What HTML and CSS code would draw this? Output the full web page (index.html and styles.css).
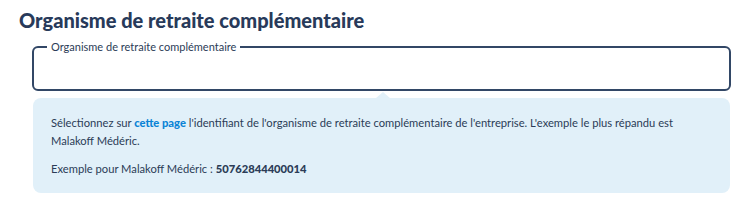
FILE: index.html
```html
<!DOCTYPE html>
<html lang="fr">
<head>
  <meta charset="UTF-8" />
  <title>Organisme de retraite complémentaire</title>
  <link rel="stylesheet" href="styles.css">
</head>
<body>

  <h1 class="section-title">Organisme de retraite complémentaire</h1>

  <div class="field-block">
    <fieldset class="outlined-field">
      <legend>Organisme de retraite complémentaire</legend>
      <input type="text" class="field-input">
    </fieldset>

    <!-- Help bubble under the field -->
    <div class="help-box">
      <p>Sélectionnez sur <a href="#">cette page</a> l'identifiant de l'organisme de retraite complémentaire de l'entreprise. L'exemple le plus répandu est Malakoff Médéric.</p>
      <p>Exemple pour Malakoff Médéric : <strong>50762844400014</strong></p>
    </div>
  </div>

</body>
</html>
```

FILE: styles.css
```css
* {
  box-sizing: border-box;
  margin: 0;
  padding: 0;
}

body {
  font-family: 'Lato', 'Noto Sans', sans-serif;
  background: #ffffff;
  color: #2b3c57;
  padding: 9px 19px;
}

.section-title {
  font-size: 20px;
  font-weight: 900;
  color: #283a5a;
  line-height: 22px;
  margin-bottom: 10px;
}

.field-block {
  margin-left: 13px;
  width: 699px;
}

.outlined-field {
  border: 2px solid #324766;
  border-radius: 6px;
  height: 50px;
  padding: 0 12px;
}

.outlined-field legend {
  font-size: 11px;
  color: #2b3c57;
  padding: 0 4px;
  margin-left: 1px;
  line-height: 12px;
}

.field-input {
  width: 100%;
  border: none;
  outline: none;
  background: transparent;
  height: 30px;
  font-family: inherit;
  font-size: 13px;
}

.help-box {
  position: relative;
  margin-top: 7px;
  margin-left: 1px;
  width: 697px;
  background: #e1f0f9;
  border-radius: 8px;
  padding: 16px 18px 15px;
  font-size: 11.2px;
  line-height: 18px;
}

.help-box::before {
  content: "";
  position: absolute;
  top: -6px;
  left: 343px;
  border-left: 7px solid transparent;
  border-right: 7px solid transparent;
  border-bottom: 6px solid #e1f0f9;
}

.help-box p + p {
  margin-top: 10px;
}

.help-box a {
  color: #0b84d6;
  font-weight: 900;
  text-decoration: none;
}

.help-box strong {
  font-weight: 900;
}
```
